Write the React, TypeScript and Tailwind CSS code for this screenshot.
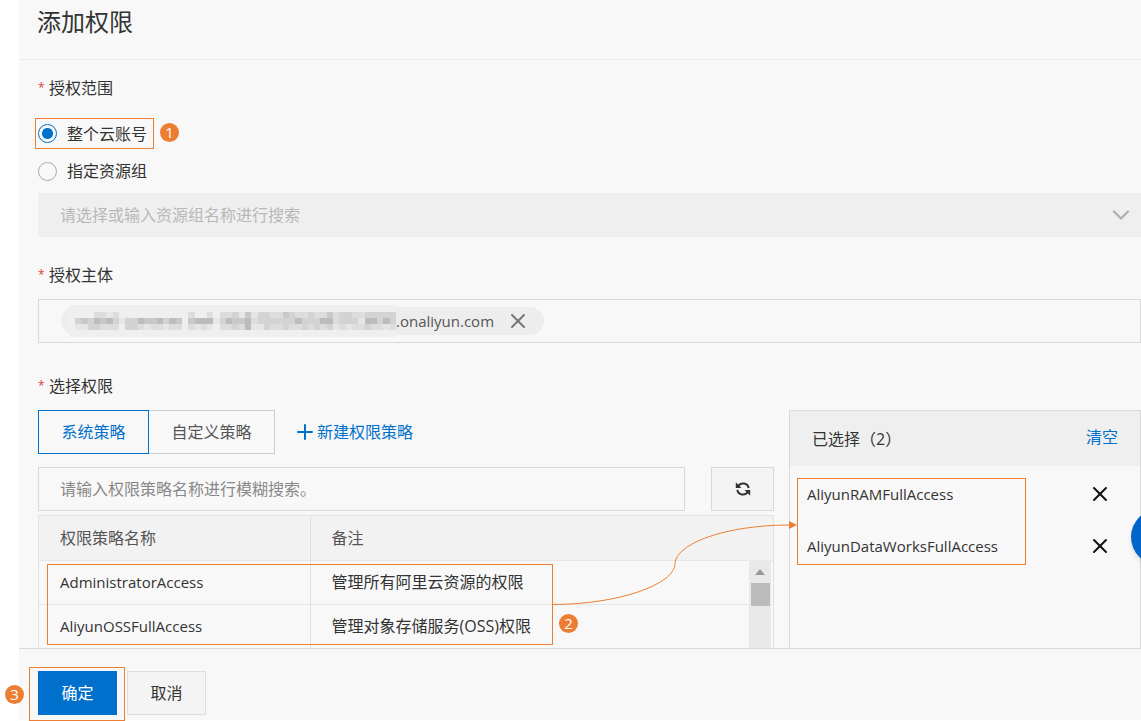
import React from 'react';
import { Plus, X, ChevronDown } from 'lucide-react';

interface Policy {
  name: string;
  remark: string;
}

const policies: Policy[] = [
  { name: 'AdministratorAccess', remark: '管理所有阿里云资源的权限' },
  { name: 'AliyunOSSFullAccess', remark: '管理对象存储服务(OSS)权限' },
];

const selected = ['AliyunRAMFullAccess', 'AliyunDataWorksFullAccess'];

// grey level of every cell of the masked account name, one string per row
const mask = [
  '000221200000000000200202231413322432232242332233333',
  '343545313354453540455513544523333335333552333155353',
  '113322203321221220212102232511322322323231212232212',
];
const greys = ['#efefef', '#e6e6e6', '#dddddd', '#d3d3d3', '#c8c8c8', '#bcbcbc'];

const MaskedName = () => (
  <div className="flex h-8 shrink-0 items-center bg-[#efefef] pl-[6px]">
    <svg
      width="321"
      height="18"
      viewBox="0 0 51 3"
      preserveAspectRatio="none"
      shapeRendering="crispEdges"
      aria-hidden="true"
    >
      {mask.map((row, y) =>
        [...row].map((level, x) => (
          <rect key={`${y}-${x}`} x={x} y={y} width="1" height="1" fill={greys[Number(level)]} />
        ))
      )}
    </svg>
  </div>
);

const RefreshIcon = () => (
  <svg width="16" height="16" viewBox="0 0 16 16" fill="none" stroke="#333" strokeWidth="2">
    <path d="M3.200 5.200A5.700 5.700 0 0 1 13.700 7.200M2.300 8.800A5.700 5.700 0 0 0 12.800 10.800" />
    <path d="M.8 1.200v5.800h5.600zM15.200 14.800V9H9.600z" fill="#333" stroke="none" />
  </svg>
);

const Label = ({ children, htmlFor }: { children: React.ReactNode; htmlFor?: string }) => (
  <label htmlFor={htmlFor} className="flex items-center gap-1 leading-6">
    <span className="w-[7px] text-xs text-[#e0403a]">*</span>
    {children}
  </label>
);

const Badge = ({ n, className }: { n: number; className: string }) => (
  <span
    className={`absolute flex size-[19px] items-center justify-center rounded-full bg-[#ed7d31] text-[15px] font-medium text-white ${className}`}
  >
    {n}
  </span>
);

const Frame = ({ className }: { className: string }) => (
  <span className={`pointer-events-none absolute border border-[#ed7d31] ${className}`} />
);

const radio =
  'size-[19px] appearance-none rounded-full border border-[#aaa] checked:border-[#0070cc] checked:bg-[radial-gradient(circle,#0070cc_5px,transparent_6px)]';

const App = () => {
  return (
    <div className="relative flex h-screen flex-col overflow-hidden bg-white pb-px pl-[19px] font-['Open_Sans','Noto_Sans_CJK_SC',sans-serif] text-base text-[#333]">
      <header className="h-[60px] shrink-0 border-b border-[#ebebeb] bg-[#f8f8f8] pl-[18px]">
        <h1 className="pt-1 text-2xl leading-9">添加权限</h1>
      </header>

      <main className="min-h-0 flex-1 overflow-hidden bg-[#f8f8f8] pt-4 pl-[19px]">
        <Label>授权范围</Label>
        <div className="relative mt-[18px] flex h-[31px] items-center">
          <label className="flex items-center gap-[10px]">
            <input type="radio" name="scope" defaultChecked className={radio} />
            整个云账号
          </label>
          <Frame className="top-0 -left-[3px] h-[31px] w-[119px]" />
          <Badge n={1} className="top-[5px] left-[122px]" />
        </div>
        <div className="mt-[7px] flex h-[30px] items-center">
          <label className="flex items-center gap-[10px]">
            <input type="radio" name="scope" className={radio} />
            指定资源组
          </label>
        </div>
        <div className="relative mt-[7px]">
          <select
            disabled
            aria-label="指定资源组"
            className="h-11 w-full appearance-none bg-[#efefef] px-[22px] text-[#b8b8b8] opacity-100"
          >
            <option>请选择或输入资源组名称进行搜索</option>
          </select>
          <ChevronDown className="absolute top-2 right-[6px] size-7 text-[#b0b0b0]" />
        </div>

        <div className="mt-[26px]">
          <Label>授权主体</Label>
        </div>
        <div className="mt-3 flex h-11 items-center border border-[#d9d9d9] pl-[22px]">
          <div className="flex h-7 items-center rounded-full bg-[#ededed] pr-[14px] pl-2 text-[#555]">
            <MaskedName />
            <span className="text-[15px]">.onaliyun.com</span>
            <button aria-label="移除" className="ml-3">
              <X className="size-6 text-[#777]" />
            </button>
          </div>
        </div>

        <div className="mt-[31px]">
          <Label htmlFor="policy">选择权限</Label>
        </div>
        <div className="relative mt-3 flex gap-[15px]">
          <section className="min-w-0 flex-1">
            <div className="flex h-11 items-center">
              <button className="h-11 w-[111px] border border-[#0070cc] text-[#0070cc]">系统策略</button>
              <button className="h-11 w-[126px] border border-l-0 border-[#ccc] text-[#555]">自定义策略</button>
              <button className="ml-[18px] flex items-center text-[#0070cc]">
                <Plus className="size-6" />
                新建权限策略
              </button>
            </div>
            <div className="mt-[13px] flex gap-[26px]">
              <input
                id="policy"
                type="text"
                placeholder="请输入权限策略名称进行模糊搜索。"
                className="h-11 min-w-0 flex-1 border border-[#d9d9d9] px-[21px] placeholder:text-[#888]"
              />
              <button
                aria-label="刷新"
                className="flex h-11 w-[63px] items-center justify-center border border-[#d9d9d9] bg-[#f4f4f4]"
              >
                <RefreshIcon />
              </button>
            </div>
            <div className="relative mt-1 h-[200px] border border-[#e3e3e3]">
              <table className="w-full table-fixed text-left">
                <thead>
                  <tr className="h-11 border-b border-[#e6e6e6] bg-[#f2f2f2] text-[#555]">
                    <th className="w-[271px] border-r border-[#e0e0e0] pl-[21px] font-normal">权限策略名称</th>
                    <th className="pl-[21px] font-normal">备注</th>
                  </tr>
                </thead>
                <tbody>
                  {policies.map((policy) => (
                    <tr key={policy.name} className="h-11 border-b border-[#e6e6e6]">
                      <td className="border-r border-[#e0e0e0] pl-[21px] text-[15px]">{policy.name}</td>
                      <td className="pl-[21px]">{policy.remark}</td>
                    </tr>
                  ))}
                </tbody>
              </table>
              <div className="absolute top-11 right-[2px] bottom-0 flex w-[22px] flex-col items-center bg-[#e9e9e9] pt-[9px]">
                <svg width="10" height="6">
                  <path d="M5 0l5 6H0z" fill="#999" />
                </svg>
                <span className="mt-2 h-[23px] w-[19px] bg-[#bbb]" />
              </div>
            </div>
          </section>

          <aside className="w-[352px] shrink-0 border border-[#d9d9d9]">
            <div className="flex h-[55px] items-center justify-between bg-[#efefef] px-[22px]">
              <span>已选择（2）</span>
              <button className="pb-1 text-[#0070cc]">清空</button>
            </div>
            <ul className="pt-[2px]">
              {selected.map((name) => (
                <li key={name} className="flex h-[52px] items-center justify-between pr-7 pl-[17px]">
                  <span className="text-[15px]">{name}</span>
                  <button aria-label="删除">
                    <X className="size-6 text-[#111]" />
                  </button>
                </li>
              ))}
            </ul>
          </aside>

          <Frame className="top-[154px] left-[9px] h-[81px] w-[506px]" />
          <Badge n={2} className="top-[204px] left-[521px]" />
          <Frame className="top-[68px] right-[115px] h-[87px] w-[229px]" />
          <svg
            width="246"
            height="90"
            fill="none"
            className="pointer-events-none absolute top-[110px] left-[514px]"
          >
            <path d="M0 84.500c66 0 123-20 123-41C124 24 172 5 239 5" stroke="#ed7d31" />
            <path d="M237 1l8 4-8 4z" fill="#ed7d31" />
          </svg>
        </div>
      </main>

      <footer className="relative flex h-[72px] shrink-0 gap-[10px] border-t border-[#d9d9d9] bg-[#f8f8f8] pt-[22px] pl-[19px]">
        <button className="h-11 w-[79px] bg-[#0070cc] text-white">确定</button>
        <button className="h-11 w-[79px] border border-[#dedede] bg-[#f4f4f4]">取消</button>
        <Frame className="top-[18px] left-[10px] h-[54px] w-24" />
        <Badge n={3} className="top-9 -left-[14px]" />
      </footer>

      <button
        aria-label="帮助"
        className="absolute top-[509px] -right-[46px] size-14 rounded-full bg-[#0064c8] shadow-md"
      />
    </div>
  );
};

export default App;
